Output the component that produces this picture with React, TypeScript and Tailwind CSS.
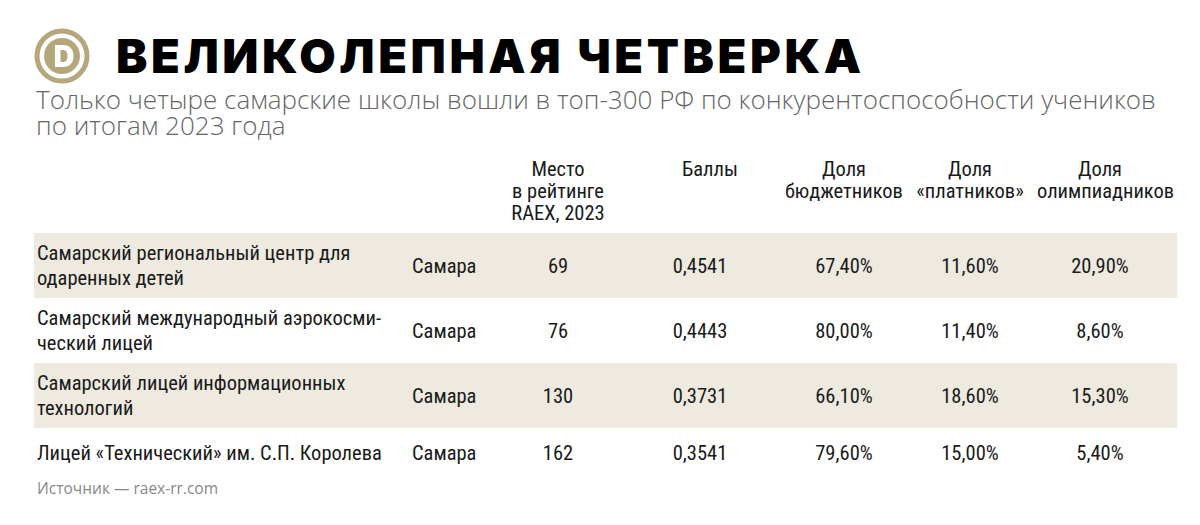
import React from 'react';

const rows = [
  { name: ['Самарский региональный центр для', 'одаренных детей'], city: 'Самара', place: '69', score: '0,4541', budget: '67,40%', paid: '11,60%', olymp: '20,90%', shaded: true },
  { name: ['Самарский международный аэрокосми-', 'ческий лицей'], city: 'Самара', place: '76', score: '0,4443', budget: '80,00%', paid: '11,40%', olymp: '8,60%', shaded: false },
  { name: ['Самарский лицей информационных', 'технологий'], city: 'Самара', place: '130', score: '0,3731', budget: '66,10%', paid: '18,60%', olymp: '15,30%', shaded: true },
  { name: ['Лицей «Технический» им. С.П. Королева'], city: 'Самара', place: '162', score: '0,3541', budget: '79,60%', paid: '15,00%', olymp: '5,40%', shaded: false },
];

const grid = 'grid grid-cols-[370px_97px_114px_170px_118px_134px_126px]';

function Logo() {
  return (
    <svg width="56" height="56" viewBox="0 0 56 56" className="shrink-0">
      <circle cx="28" cy="28" r="25" fill="none" stroke="#b3a77b" strokeWidth="5" />
      <circle cx="28" cy="28" r="18" fill="#b3a77b" />
      <path d="M21 17 H29 C36 17 39.5 21.5 39.5 28 C39.5 34.5 36 39 29 39 H21 Z M26.5 22 V34 H28.5 C32 34 33.5 32 33.5 28 C33.5 24 32 22 28.5 22 Z" fill="#fff" fillRule="evenodd" />
    </svg>
  );
}

export default function App() {
  return (
    <div className="w-[1200px] h-[525px] bg-white overflow-hidden pl-[34px] pt-[28px]">
      {/* Title */}
      <div className="flex items-center gap-[26px]">
        <Logo />
        <h1 className="font-['Inter'] font-black text-[47px] leading-[56px] tracking-[3.6px] text-black">
          ВЕЛИКОЛЕПНАЯ ЧЕТВЕРКА
        </h1>
      </div>
      <p className="font-['Open_Sans'] font-[350] text-[26px] leading-[26px] text-[#666] mt-[2px] pl-[2px] w-[1140px]">
        Только четыре самарские школы вошли в топ-300 РФ по конкурентоспособности учеников по итогам 2023 года
      </p>

      {/* Table */}
      <div className="font-['Roboto_Condensed','Liberation_Sans',sans-serif] text-[20.5px] leading-[22px] text-[#1a1a1a] mt-[20px]">
        <div className={`${grid} h-[75px] text-center`}>
          <div />
          <div />
          <div>Место<br />в рейтинге<br />RAEX, 2023</div>
          <div className="pl-[20px]">Баллы</div>
          <div>Доля<br />бюджетников</div>
          <div>Доля<br />«платников»</div>
          <div>Доля<br />олимпиадников</div>
        </div>
        <div className="w-[1143px]">
          {rows.map((r, i) => (
            <div
              key={i}
              className={`${grid} items-center ${i === 3 ? 'h-[50px]' : 'h-[65px]'} ${r.shaded ? 'bg-[#eeeadf]' : ''}`}
            >
              <div className="pl-[3px] leading-[25px]">
                {r.name.map((l, j) => (
                  <div key={j}>{l}</div>
                ))}
              </div>
              <div className="pl-[8px]">{r.city}</div>
              <div className="text-center">{r.place}</div>
              <div className="text-center">{r.score}</div>
              <div className="text-center">{r.budget}</div>
              <div className="text-center">{r.paid}</div>
              <div className="text-center">{r.olymp}</div>
            </div>
          ))}
        </div>
      </div>

      <div className="font-['Open_Sans'] text-[15.5px] leading-[20px] text-[#888] mt-[0px] pl-[3px]">
        Источник — raex-rr.com
      </div>
    </div>
  );
}
